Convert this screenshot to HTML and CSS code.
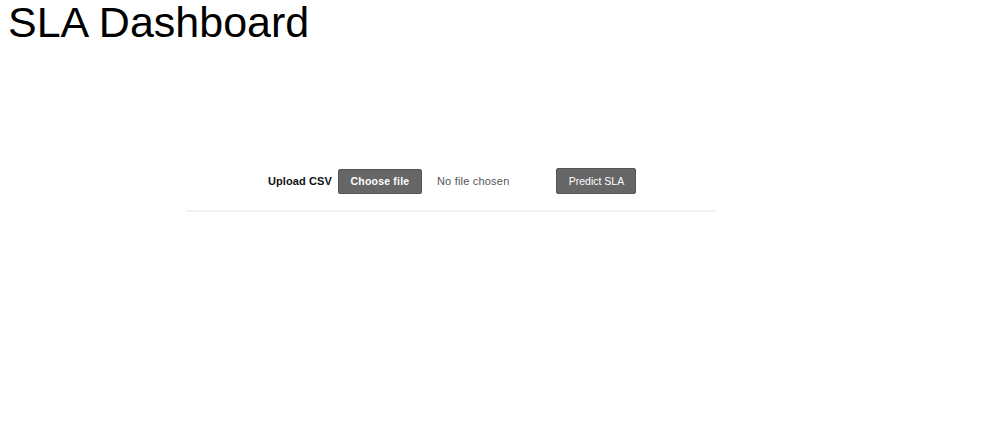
FILE: index.html
```html
<!DOCTYPE html>
<html lang="en">
<head>
    <meta charset="UTF-8">
    <meta name="viewport" content="width=device-width, initial-scale=1.0">
    <title>SLA Dashboard</title>
    <link rel="stylesheet" href="styles.css">
</head>
<body>
    <h1>SLA Dashboard</h1>

    <!-- Upload Section -->
    <div class="panel">
        <div class="upload-row">
            <span class="upload-label">Upload CSV</span>
            <label class="btn btn-file">
                Choose file
                <input type="file" id="csvFile" accept=".csv">
            </label>
            <span class="file-name">No file chosen</span>
            <button class="btn btn-predict">Predict SLA</button>
        </div>
    </div>
</body>
</html>
```

FILE: styles.css
```css
body {
    font-family: 'Liberation Sans', Arial, sans-serif;
    background-color: #fff;
    margin: 0;
    padding: 0 8px;
    color: #000;
}

h1 {
    font-size: 43px;
    font-weight: normal;
    line-height: 48px;
    margin: -2px 0 0;
}

.panel {
    width: 530px;
    margin: 122px 0 0 178px;
    padding-bottom: 16px;
    border-bottom: 2px solid #f2f2f2;
}

.upload-row {
    display: flex;
    align-items: center;
    height: 26px;
    padding-left: 82px;
}

.upload-label {
    font-size: 11px;
    font-weight: bold;
    letter-spacing: 0.1px;
    color: #111;
}

.btn {
    display: inline-flex;
    align-items: center;
    justify-content: center;
    box-sizing: border-box;
    background-color: #666;
    color: #fff;
    border: 1px solid #555;
    border-radius: 2px;
    font-family: inherit;
    cursor: pointer;
}

.btn-file {
    width: 84px;
    height: 25px;
    margin-left: 6px;
    font-size: 10.5px;
    font-weight: bold;
    letter-spacing: 0.2px;
}

.btn-file input {
    display: none;
}

.file-name {
    margin-left: 15px;
    font-size: 11px;
    letter-spacing: 0.2px;
    color: #555;
}

.btn-predict {
    width: 80px;
    height: 26px;
    margin-left: 47px;
    padding: 0;
    font-size: 10.5px;
    font-weight: normal;
}
```
